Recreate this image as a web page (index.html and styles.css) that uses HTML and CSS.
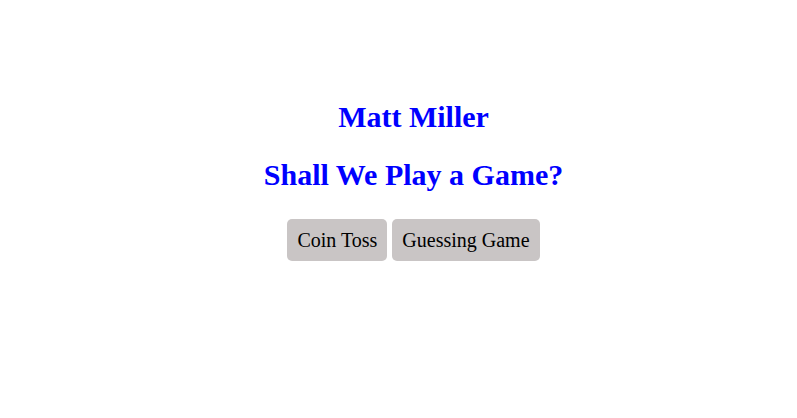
FILE: index.html
```html
<!DOCTYPE html>
<html>
<head>
<meta charset="utf-8">
<title>Shall We Play a Game?</title>
<link rel="stylesheet" href="styles.css">
</head>
<body>
<main class="page">
  <h2 class="title">Matt Miller</h2>
  <h2 class="title title-sub">Shall We Play a Game?</h2>
  <div class="buttons">
    <button class="btn">Coin Toss</button>
    <button class="btn">Guessing Game</button>
  </div>
</main>
</body>
</html>
```
FILE: styles.css
```css
html, body {
  margin: 0;
  background: #ffffff;
}
body {
  font-family: "Liberation Serif", "Times New Roman", serif;
}
.page {
  display: flex;
  flex-direction: column;
  align-items: center;
  padding: 100px 0 0 30px;
}
.title {
  margin: 0;
  font-size: 30px;
  line-height: 33px;
  font-weight: bold;
  color: #0000ff;
}
.title-sub {
  margin-top: 25px;
}
.buttons {
  display: flex;
  gap: 5px;
  margin-top: 28px;
}
.btn {
  font-family: "Liberation Serif", "Times New Roman", serif;
  font-size: 20px;
  line-height: 22px;
  padding: 10px 10px;
  border: none;
  border-radius: 5px;
  background: #c9c5c5;
  color: #000000;
}
```
